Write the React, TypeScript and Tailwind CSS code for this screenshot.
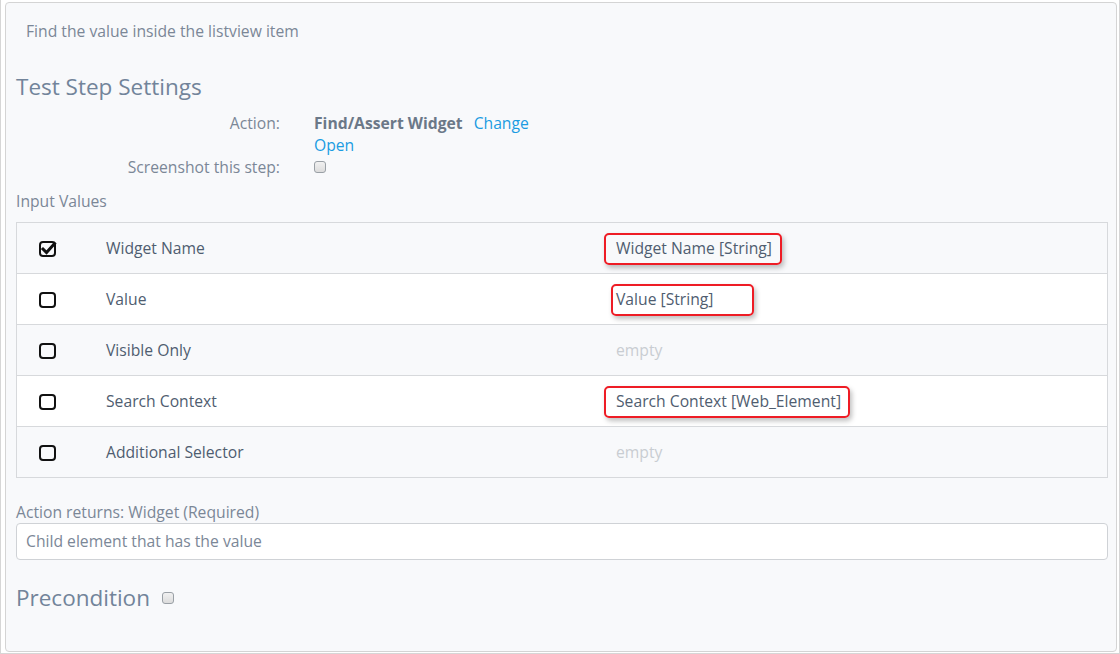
import React from "react";

const font = { fontFamily: '"Open Sans", "Liberation Sans", sans-serif' };

function BoxIcon({ checked }: { checked?: boolean }) {
  return (
    <svg width="18" height="18" viewBox="0 0 18 18" className="block">
      <rect x="1" y="2" width="15" height="14" rx="3" fill="none" stroke="#111" strokeWidth="2" />
      {checked && (
        <path d="M4 9 L7.5 12.5 L15.5 3.5" fill="none" stroke="#111" strokeWidth="3" strokeLinecap="square" />
      )}
    </svg>
  );
}

function SmallCheck() {
  return <span className="inline-block w-[12px] h-[12px] rounded-[3px] border border-[#9aa0a6] bg-gradient-to-b from-[#f1f1f1] to-[#dcdcdc]" />;
}

const rows = [
  { name: "Widget Name", value: "Widget Name [String]", checked: true, mark: "ml-[-12px] pl-[10px] pr-[8px]" },
  { name: "Value", value: "Value [String]", mark: "ml-[-5px] pl-[3px] pr-[38px]" },
  { name: "Visible Only", value: "" },
  { name: "Search Context", value: "Search Context [Web_Element]", mark: "ml-[-12px] pl-[10px] pr-[7px]" },
  { name: "Additional Selector", value: "" },
];

export default function App() {
  return (
    <div style={font} className="w-[1120px] h-[654px] bg-white border-x border-b border-[#d6d6d6] pt-[2px] pl-[4px] pr-[2px] pb-[1px] overflow-hidden">
      <div className="h-full bg-[#f8f9fb] border border-[#d4d4d4] rounded-[4px] pl-[10px] pr-[8px]">
        <p className="text-[15.7px] text-[#7b8797] pl-[10px] pt-[17px] leading-[22px]">Find the value inside the listview item</p>

        <h2 className="text-[22.5px] text-[#72849a] mt-[30px] leading-[30px]">Test Step Settings</h2>

        <div className="grid grid-cols-[264px_1fr] gap-x-[34px] text-[15.7px] leading-[22px] mt-[10px] text-[#7b8797]">
          <span className="text-right">Action:</span>
          <div>
            <span className="font-bold text-[#6b7888]">Find/Assert Widget</span>
            <span className="ml-[11px] text-[#1b9ce2]">Change</span>
            <div className="text-[#1b9ce2]">Open</div>
          </div>
          <span className="text-right">Screenshot this step:</span>
          <div className="flex items-center h-[22px]"><SmallCheck /></div>
        </div>

        <p className="text-[15.7px] text-[#7b8797] mt-[12px] leading-[22px]">Input Values</p>

        <div className="mt-[10px] border border-[#d7d9dc]">
          {rows.map((r, i) => (
            <div key={r.name} className={`flex items-center text-[15.7px] pt-[2px] ${i > 0 ? "h-[51px] border-t border-[#d7d9dc]" : "h-[50px]"} ${i % 2 === 0 ? "bg-[#f8f9fb]" : "bg-white"}`}>
              <div className="w-[89px] pl-[22px]"><BoxIcon checked={r.checked} /></div>
              <div className="w-[510px] text-[#4f5d70]">{r.name}</div>
              <div className="flex-1">
                {r.value ? (
                  <span className={`inline-block border-2 border-[#ee1c25] rounded-[5px] shadow-[2px_3px_5px_rgba(0,0,0,0.25)] py-[2px] text-[#4f5d70] ${r.mark}`}>{r.value}</span>
                ) : (
                  <span className="text-[#c9cdd2]">empty</span>
                )}
              </div>
            </div>
          ))}
        </div>

        <p className="text-[15.7px] text-[#7b8797] mt-[23px] leading-[22px]">Action returns: Widget (Required)</p>
        <div className="h-[37px] bg-white border border-[#cfd2d6] rounded-[4px] flex items-center pl-[9px] text-[15.7px] text-[#7b8797]">Child element that has the value</div>

        <div className="flex items-center mt-[19px] gap-[12px]">
          <h2 className="text-[22.5px] text-[#72849a] leading-[38px]">Precondition</h2>
          <SmallCheck />
        </div>
      </div>
    </div>
  );
}
